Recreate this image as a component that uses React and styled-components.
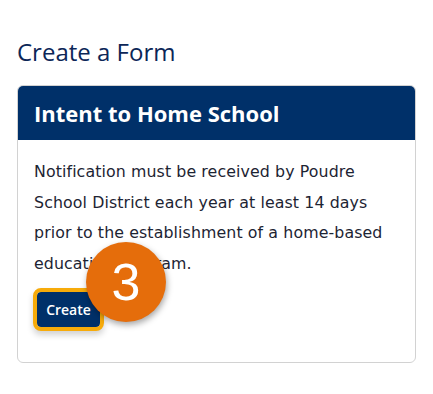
import React from "react";
import styled, { createGlobalStyle } from "styled-components";

const Global = createGlobalStyle`
  html, body { margin: 0; padding: 0; background: #fff; }
  body { font-family: "Open Sans", "Noto Sans", sans-serif; }
`;

const Page = styled.div`
  padding: 37px 17px 0 17px;
  width: 399px;
`;

const Heading = styled.h2`
  margin: 0 0 18px 0;
  font-family: "Open Sans", sans-serif;
  font-weight: 400;
  font-size: 24px;
  line-height: 30px;
  color: #0c2657;
`;

const Card = styled.div`
  border: 1px solid #d2d2d2;
  border-radius: 6px;
  overflow: hidden;
  background: #fff;
`;

const CardHeader = styled.div`
  background: #003069;
  height: 54px;
  display: flex;
  align-items: center;
  padding: 0 16px;
`;

const CardTitle = styled.h3`
  margin: 0;
  color: #fff;
  font-family: "Open Sans", sans-serif;
  font-weight: 700;
  font-size: 22px;
  line-height: 28px;
`;

const CardBody = styled.div`
  padding: 17px 16px 35px 16px;
`;

const Text = styled.p`
  margin: 0 0 13px 0;
  font-family: "DejaVu Sans", sans-serif;
  font-size: 15.8px;
  letter-spacing: 0.1px;
  line-height: 30.5px;
  color: #1d2433;
`;

const ButtonWrap = styled.div`
  position: relative;
  display: inline-block;
  margin-left: 3px;
`;

const Button = styled.button`
  display: block;
  background: #003069;
  color: #fff;
  border: none;
  border-radius: 4px;
  height: 35px;
  width: 63px;
  padding: 0;
  font-family: "Open Sans", sans-serif;
  font-weight: 600;
  font-size: 14px;
  outline: 4px solid #f7ab0a;
  outline-offset: 0;
  box-shadow: 0 4px 6px 4px rgba(0, 0, 0, 0.18);
  cursor: pointer;
`;

const Badge = styled.div`
  position: absolute;
  left: 49px;
  top: -50px;
  width: 80px;
  height: 80px;
  border-radius: 50%;
  background: #e56d0b;
  color: #fff;
  display: flex;
  align-items: center;
  justify-content: center;
  font-family: "Liberation Sans", Arial, sans-serif;
  font-size: 52px;
  line-height: 1;
  box-shadow: 1px 3px 6px rgba(0, 0, 0, 0.35);
`;

export default function App() {
  return (
    <>
      <Global />
      <Page>
        <Heading>Create a Form</Heading>
        <Card>
          <CardHeader>
            <CardTitle>Intent to Home School</CardTitle>
          </CardHeader>
          <CardBody>
            <Text>
              Notification must be received by Poudre School District each year at
              least 14 days prior to the establishment of a home-based education
              program.
            </Text>
            <ButtonWrap>
              <Button>Create</Button>
              <Badge>3</Badge>
            </ButtonWrap>
          </CardBody>
        </Card>
      </Page>
    </>
  );
}
